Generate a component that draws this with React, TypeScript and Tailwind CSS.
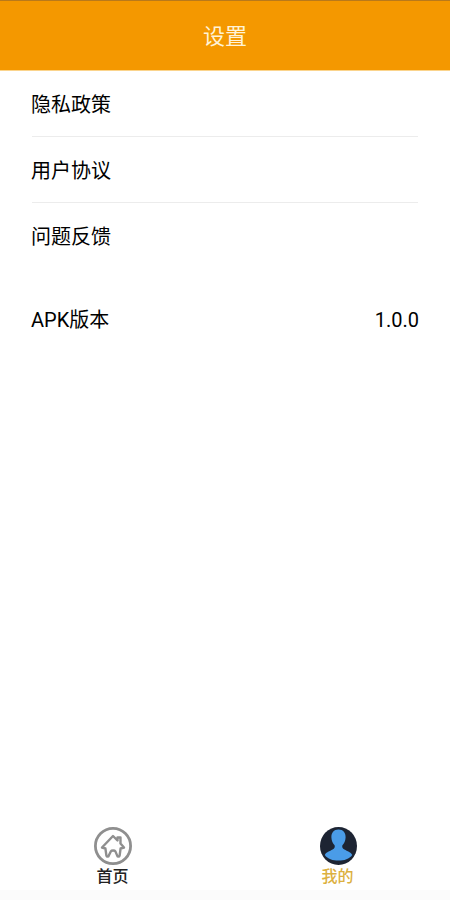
const FONT = "font-['Roboto','Noto_Sans_CJK_SC',sans-serif]";

const rows = ["隐私政策", "用户协议", "问题反馈"];

const HomeIcon = () => (
  <svg width="38" height="38" viewBox="0 0 38 38" fill="none">
    <circle cx="19" cy="19" r="17.6" stroke="#8f8f8f" strokeWidth="2.8" />
    <path
      d="M8 20.5 L19 9 L23.5 13.5 V10.5 H26.5 V16.5 L30 20.5 L26.6 21.5 L25.6 28.6 C25.2 30 23.6 30 23.2 28.6 L21.4 24.4 C20.6 23.2 17.6 23.2 16.8 24.4 L14.8 28.6 C14.4 30 12.8 30 12.4 28.6 L11.4 21.5 Z"
      stroke="#8f8f8f"
      strokeWidth="2.4"
      strokeLinejoin="round"
    />
  </svg>
);

const UserIcon = () => (
  <svg width="37" height="38" viewBox="0 0 37 38">
    <ellipse cx="18.5" cy="19" rx="18.5" ry="19" fill="#1d2433" />
    <path
      d="M18.5 2.5 C13.8 2.5 11.2 6 11.4 10.4 C11.6 14 12.8 16.4 14.6 18.2 C15.2 20 14.4 21.6 12.6 22.6 C9.8 24.2 6 25.2 4.8 28 C7.6 32 12.8 33.6 18.5 33.6 C24.2 33.6 29.4 32 32.2 28 C31 25.2 27.2 24.2 24.4 22.6 C22.6 21.6 21.8 20 22.4 18.2 C24.2 16.4 25.4 14 25.6 10.4 C25.8 6 23.2 2.5 18.5 2.5 Z"
      fill="#4a9ce8"
    />
  </svg>
);

export default function App() {
  return (
    <div className={`${FONT} w-[450px] h-[900px] bg-white flex flex-col text-black`}>
      <header className="h-[71px] shrink-0 bg-[#f49800] border-t border-[#b9791a] border-b border-b-[#fbd48c] pt-[2px] flex items-center justify-center">
        <h1 className="text-[22px] text-[#fff3d6] font-normal">设置</h1>
      </header>

      <main className="flex-1 px-8">
        {rows.map((row, i) => (
          <div
            key={row}
            className={`h-[66px] pt-[3px] flex items-center text-[20px] text-black border-b ${
              i < rows.length - 1 ? "border-[#ececec]" : "border-transparent"
            }`}
          >
            <span className="-ml-px">{row}</span>
          </div>
        ))}
        <div className="mt-[18px] h-[66px] flex items-center justify-between text-[20px] text-black">
          <span className="-ml-px">APK版本</span>
          <span className="-mr-px">1.0.0</span>
        </div>
      </main>

      <nav className="h-[74px] shrink-0 flex pt-[11px] bg-white">
        <div className="flex-1 flex flex-col items-center">
          <HomeIcon />
          <span className="text-[16px] leading-[24px] font-medium text-[#222]">首页</span>
        </div>
        <div className="flex-1 flex flex-col items-center">
          <div className="ml-px">
            <UserIcon />
          </div>
          <span className="text-[16px] leading-[24px] font-medium text-[#dcb040]">我的</span>
        </div>
      </nav>
      <div className="h-[10px] shrink-0 bg-[#fbfbfb]" />
    </div>
  );
}
